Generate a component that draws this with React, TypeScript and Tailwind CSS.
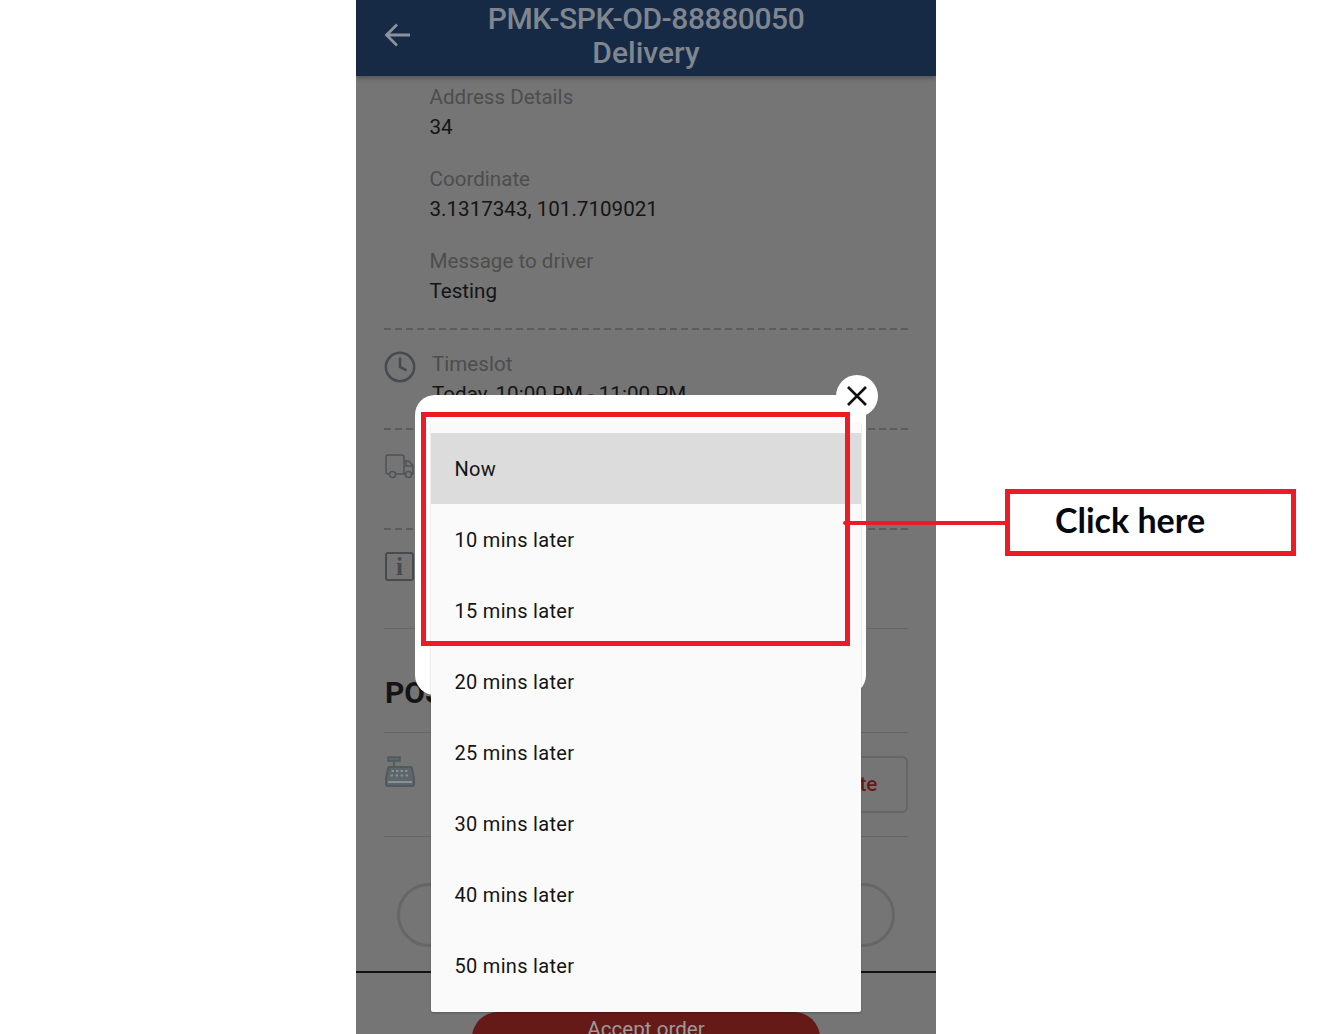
import React from "react";
import { Clock } from "lucide-react";

const font = { fontFamily: "Roboto, 'Liberation Sans', sans-serif" };

function Group({ label, value }: { label: string; value: string }) {
  return (
    <div className="mb-[22px] text-[20.6px] leading-[30px]">
      <div className="text-[#4d4d4d]">{label}</div>
      <div className="text-[#141414]">{value}</div>
    </div>
  );
}

function Dashed() {
  return <div className="h-[2px] bg-[repeating-linear-gradient(90deg,#5c5c5c_0_7px,transparent_7px_11px)]" />;
}

const times = ["Now", "10 mins later", "15 mins later", "20 mins later", "25 mins later", "30 mins later", "40 mins later", "50 mins later"];

export default function App() {
  return (
    <div className="relative h-[1034px] w-[1320px] overflow-hidden bg-white" style={font}>
      <div className="ml-[356px] flex h-[1034px] w-[580px] flex-col overflow-hidden bg-[#757575]">
        <header className="relative flex h-[76px] shrink-0 items-start bg-[#172a45] shadow-[0_2px_5px_rgba(0,0,0,0.3)]">
          <svg className="ml-[28px] mt-[21px]" width="28" height="28" viewBox="0 0 28 28" fill="none" stroke="#8a929c" strokeWidth="2.8">
            <path d="M26 14H3M13 3.5 2.5 14 13 24.5" />
          </svg>
          <div className="-ml-[56px] w-[580px] text-center text-[30px] font-medium leading-[34px] text-[#7f8690]">
            <div className="mt-[2px] tracking-[-0.44px]">PMK-SPK-OD-88880050</div>
            <div>Delivery</div>
          </div>
        </header>

        <div className="flex flex-1 flex-col px-[28px]">
          <div className="ml-[45.5px] mt-[6px]">
            <Group label="Address Details" value="34" />
            <Group label="Coordinate" value="3.1317343, 101.7109021" />
            <Group label="Message to driver" value="Testing" />
          </div>

          <Dashed />
          <div className="flex h-[98px] pt-[20px]">
            <Clock className="-ml-[1.5px]" size={34} strokeWidth={1.8} color="#454b4f" />
            <div className="ml-[15.5px] -mt-[1px] text-[20.6px] leading-[30px]">
              <div className="text-[#4d4d4d]">Timeslot</div>
              <div className="text-[#141414]">Today, 10:00 PM - 11:00 PM</div>
            </div>
          </div>

          <Dashed />
          <div className="h-[98px] pt-[24px]">
            <svg className="ml-[1px]" width="30" height="26" viewBox="0 0 30 26" fill="none" stroke="#4f5356" strokeWidth="1.5">
              <path d="M4 20H3a2 2 0 0 1-2-2V3a2 2 0 0 1 2-2h14a2 2 0 0 1 2 2v17H11" />
              <path d="M19 7h5l4 5v8h-1" />
              <path d="M19 20h1M21 7v5h7" />
              <circle cx="7.5" cy="20.5" r="3" />
              <circle cx="23.5" cy="20.5" r="3" />
            </svg>
          </div>

          <Dashed />
          <div className="h-[98px] pt-[22px]">
            <div className="ml-[1px] flex h-[29px] w-[29px] items-center justify-center rounded-[3px] border-[2.5px] border-[#454b4f] text-[25px] font-bold leading-none text-[#454b4f]" style={{ fontFamily: "'Liberation Serif', serif" }}>
              i
            </div>
          </div>

          <div className="h-[104px] border-t border-[#656565]">
            <div className="ml-[1px] mt-[47px] text-[30px] font-bold leading-[34px] text-[#141414]">POS</div>
          </div>

          <div className="flex h-[105px] items-start justify-between border-y border-[#656565] pt-[23px]">
            <svg className="ml-[1px]" width="30" height="31" viewBox="0 0 30 31" fill="none">
              <path d="M3 1h12v4H3z" fill="#5d666a" stroke="#505a5e" strokeWidth="1.5" />
              <path d="M9 5v6" stroke="#505a5e" strokeWidth="2" />
              <path d="M5 11h20a2 2 0 0 1 2 2l2 9v6a2 2 0 0 1-2 2H3a2 2 0 0 1-2-2v-6l2-9a2 2 0 0 1 2-2z" fill="#5d666a" stroke="#505a5e" strokeWidth="2" />
              <g fill="#8b9093">
                <rect x="6.5" y="14" width="2.5" height="2" /><rect x="11" y="14" width="2.5" height="2" /><rect x="15.5" y="14" width="2.5" height="2" /><rect x="20" y="14" width="2.5" height="2" />
                <rect x="5.5" y="18.5" width="2.5" height="2" /><rect x="10.5" y="18.5" width="2.5" height="2" /><rect x="15.5" y="18.5" width="2.5" height="2" /><rect x="20.5" y="18.5" width="2.5" height="2" />
                <rect x="3" y="25" width="24" height="2" />
              </g>
            </svg>
            <div className="flex h-[57px] w-[120px] items-center justify-center rounded-[6px] border-2 border-[#666666] pr-[7px] text-[20.6px] font-medium text-[#661a18]">Update</div>
          </div>

          <div className="flex h-[133px] items-start justify-between px-[13px] pt-[46px]">
            <div className="h-[64px] w-[64px] rounded-full border-[3px] border-[#666666]" />
            <div className="h-[64px] w-[64px] rounded-full border-[3px] border-[#666666]" />
          </div>
        </div>

        <div className="relative h-[63px] shrink-0 border-t-2 border-[#111111]">
          <div className="absolute left-[116px] top-[39px] flex h-[60px] w-[348px] justify-center rounded-t-[26px] bg-[#661a18] pt-[3px] text-[20.6px] leading-[28px] text-[#9c9c9c]">Accept order</div>
        </div>
      </div>

      {/* Dialog over the dimmed page */}
      <div className="absolute left-[415px] top-[395px] h-[300px] w-[451px] rounded-[20px] bg-white" />
      <div className="absolute left-[431px] top-[423px] w-[430px] rounded-b-[2px] bg-[#fafafa] pb-[11px] pt-[10px] shadow-[0_1px_2px_rgba(0,0,0,0.25)]">
        {times.map((t, i) => (
          <div key={t} className={`flex h-[71px] items-center pl-[23.5px] text-[20px] tracking-[0.3px] text-[#141414] ${i === 0 ? "bg-[#dcdcdc]" : ""}`}>
            {t}
          </div>
        ))}
      </div>
      <div className="absolute left-[836px] top-[375px] flex h-[42px] w-[42px] items-center justify-center rounded-full bg-white">
        <svg width="22" height="22" viewBox="0 0 22 22" fill="none" stroke="#111" strokeWidth="2.6">
          <path d="M2 2 20 20M20 2 2 20" />
        </svg>
      </div>

      {/* Annotation */}
      <div className="absolute left-[421px] top-[412px] h-[234px] w-[429px] border-[5px] border-[#ed1c24]" />
      <div className="absolute left-[843px] top-[521px] h-[4px] w-[164px] rounded-l-full bg-[#ed1c24]" />
      <div className="absolute left-[1005px] top-[489px] flex h-[67px] w-[291px] items-center border-[5px] border-[#ed1c24] pb-[6px] pl-[45px] text-[34px] font-bold text-[#05080f]" style={{ fontFamily: "Lato, sans-serif" }}>
        Click here
      </div>
    </div>
  );
}
